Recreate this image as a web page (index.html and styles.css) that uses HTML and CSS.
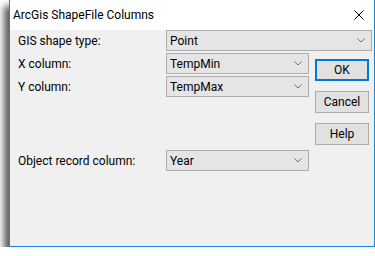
FILE: index.html
```html
<!DOCTYPE html>
<html lang="en">
<head>
    <meta charset="UTF-8">
    <title>ArcGis ShapeFile Columns</title>
    <link rel="stylesheet" href="styles.css">
</head>
<body>

    <div class="window">

        <!-- Titelleiste -->
        <div class="title-bar">
            <span class="title">ArcGis ShapeFile Columns</span>
            <svg class="close" width="10" height="10" viewBox="0 0 10 10">
                <path d="M0.5 0.5 L9.5 9.5 M9.5 0.5 L0.5 9.5" stroke="#000" stroke-width="1" fill="none"/>
            </svg>
        </div>

        <div class="content">

            <div class="row">
                <label class="label">GIS shape type:</label>
                <div class="combo combo-wide">
                    <span>Point</span>
                    <svg class="chevron" width="8" height="5" viewBox="0 0 8 5"><polyline points="0.5,0.5 4,4 7.5,0.5" fill="none" stroke="#707070"/></svg>
                </div>
            </div>

            <div class="main">
                <div class="left">
                    <div class="row">
                        <label class="label">X column:</label>
                        <div class="combo">
                            <span>TempMin</span>
                            <svg class="chevron" width="8" height="5" viewBox="0 0 8 5"><polyline points="0.5,0.5 4,4 7.5,0.5" fill="none" stroke="#707070"/></svg>
                        </div>
                    </div>
                    <div class="row">
                        <label class="label">Y column:</label>
                        <div class="combo">
                            <span>TempMax</span>
                            <svg class="chevron" width="8" height="5" viewBox="0 0 8 5"><polyline points="0.5,0.5 4,4 7.5,0.5" fill="none" stroke="#707070"/></svg>
                        </div>
                    </div>
                    <div class="row row-object">
                        <label class="label">Object record column:</label>
                        <div class="combo">
                            <span>Year</span>
                            <svg class="chevron" width="8" height="5" viewBox="0 0 8 5"><polyline points="0.5,0.5 4,4 7.5,0.5" fill="none" stroke="#707070"/></svg>
                        </div>
                    </div>
                </div>

                <!-- Schaltflächen -->
                <div class="buttons">
                    <div class="button button-default">OK</div>
                    <div class="button">Cancel</div>
                    <div class="button">Help</div>
                </div>
            </div>

        </div>
    </div>

</body>
</html>
```

FILE: styles.css
```css
body {
    font-family: Roboto, "Liberation Sans", Arial, sans-serif;
    font-size: 12px;
    margin: 0;
    padding: 0;
    background-color: #fff;
    color: #000;
}
.window {
    width: 366px;
    height: 247px;
    margin-left: 9px;
    box-sizing: border-box;
    border: 1px solid #1c86d9;
    border-top: none;
    background-color: #f0f0f0;
    box-shadow: -5px 6px 7px rgba(0, 0, 0, 0.65);
}
.title-bar {
    height: 30px;
    background: #fff;
    display: flex;
    align-items: center;
    padding-left: 3px;
    padding-right: 10px;
}
.title {
    flex: 1;
    padding-bottom: 1px;
}
.close {
    display: block;
    margin-bottom: 1px;
}
.content {
    padding-left: 8px;
}
.row {
    display: flex;
    align-items: center;
    height: 21px;
}
.label {
    width: 148px;
    flex-shrink: 0;
}
.combo {
    width: 143px;
    height: 21px;
    box-sizing: border-box;
    border: 1px solid #adadad;
    background-color: #e5e5e5;
    display: flex;
    align-items: center;
    padding-left: 3px;
    padding-right: 6px;
}
.combo span {
    flex: 1;
}
.combo-wide {
    width: 206px;
}
.chevron {
    display: block;
}
.main {
    display: flex;
    margin-top: 2px;
}
.left .row + .row {
    margin-top: 2px;
}
.left .row-object {
    margin-top: 53px !important;
}
.buttons {
    margin-left: 6px;
    padding-top: 6px;
    display: flex;
    flex-direction: column;
    gap: 10px;
}
.button {
    width: 54px;
    height: 22px;
    box-sizing: border-box;
    border: 1px solid #adadad;
    background-color: #e1e1e1;
    display: flex;
    align-items: center;
    justify-content: center;
}
.button-default {
    border: 2px solid #0078d7;
}
```
